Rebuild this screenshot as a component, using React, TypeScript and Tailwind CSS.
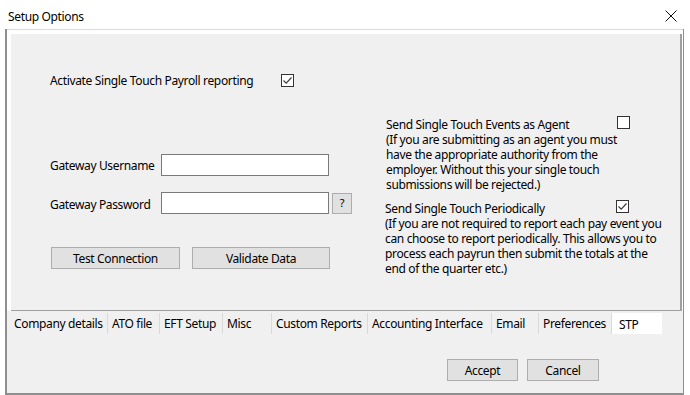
import React from "react";

const FONT = { fontFamily: '"Noto Sans", "Open Sans", sans-serif' };

const CheckBox = ({ checked = false, className = "" }: { checked?: boolean; className?: string }) => (
  <div className={`w-[13px] h-[13px] border border-[#333333] bg-white flex items-center justify-center shrink-0 ${className}`}>
    {checked && (
      <svg width="11" height="11" viewBox="0 0 11 11">
        <path d="M1.5 5.5 L4.2 8.2 L9.5 2.5" fill="none" stroke="#3c3c3c" strokeWidth="1.2" />
      </svg>
    )}
  </div>
);

const Btn = ({ label, w }: { label: string; w: string }) => (
  <div className={`${w} h-[22px] bg-[#e1e1e1] border border-[#adadad] flex items-center justify-center text-[12px] text-black pt-[1px]`}>
    {label}
  </div>
);

const TABS = [
  { label: "Company details", w: "w-[98px]" },
  { label: "ATO file", w: "w-[52px]" },
  { label: "EFT Setup", w: "w-[63px]" },
  { label: "Misc", w: "w-[49px]" },
  { label: "Custom Reports", w: "w-[96px]" },
  { label: "Accounting Interface", w: "w-[124px]" },
  { label: "Email", w: "w-[47px]" },
  { label: "Preferences", w: "w-[73px]" },
];

export default function App() {
  return (
    <div className="w-[690px] h-[395px] bg-white flex flex-col text-black overflow-hidden tracking-[-0.35px]" style={FONT}>
      {/* Title bar */}
      <div className="h-[29px] shrink-0 flex items-center justify-between pl-[8px] pr-[13px] pt-[4px]">
        <span className="text-[12px] leading-none">Setup Options</span>
        <svg width="12" height="12" viewBox="0 0 12 12" className="-mt-[1px]">
          <path d="M0.5 0.5 L11.5 11.5 M11.5 0.5 L0.5 11.5" stroke="#111" strokeWidth="1" />
        </svg>
      </div>

      {/* Client area */}
      <div className="ml-[5px] w-[679px] flex-1 flex flex-col bg-[#f0f0f0] border-l-2 border-r border-b-2 border-[#8f8f8f]">
        {/* Tab page */}
        <div className="h-[282px] shrink-0 border-t border-[#d9d9d9] bg-white pl-[4px] pt-[4px] pr-[1px] flex">
          <div className="flex-1 bg-[#f0f0f0] border-r-2 border-b border-[#a0a0a0] pl-[39px] pt-[39px] text-[12px]">
            <div className="flex items-center h-[16px]">
              <span className="w-[231px]">Activate Single Touch Payroll reporting</span>
              <CheckBox checked className="-mt-[2px]" />
            </div>

            <div className="flex mt-[28px]">
              {/* Left column */}
              <div className="w-[335px] pt-[37px] shrink-0">
                <div className="flex items-center">
                  <span className="w-[111px] pt-[2px]">Gateway Username</span>
                  <div className="w-[168px] h-[22px] bg-white border border-[#7a7a7a]" />
                </div>
                <div className="flex items-center mt-[16px]">
                  <span className="w-[111px] pt-[3px]">Gateway Password</span>
                  <div className="w-[168px] h-[22px] bg-white border border-[#7a7a7a]" />
                  <div className="ml-[3px] w-[20px] h-[21px] bg-[#e1e1e1] border border-[#adadad] flex items-center justify-center text-[11px]">
                    ?
                  </div>
                </div>
                <div className="flex mt-[33px] ml-[1px]">
                  <Btn label="Test Connection" w="w-[129px]" />
                  <div className="ml-[12px]">
                    <Btn label="Validate Data" w="w-[138px]" />
                  </div>
                </div>
              </div>

              {/* Right column */}
              <div className="leading-[15px] ml-[1px]">
                <div className="flex items-start">
                  <span className="w-[231px]">Send Single Touch Events as Agent</span>
                  <CheckBox className="-mt-[1px]" />
                </div>
                <div>(If you are submitting as an agent you must</div>
                <div>have the appropriate authority from the</div>
                <div>employer. Without this your single touch</div>
                <div>submissions will be rejected.)</div>

                <div className="flex items-start mt-[9px] -ml-[1px]">
                  <span className="w-[231px]">Send Single Touch Periodically</span>
                  <CheckBox checked className="-mt-[1px]" />
                </div>
                <div className="-ml-[1px]">
                  <div className="whitespace-nowrap">(If you are not required to report each pay event you</div>
                  <div className="whitespace-nowrap">can choose to report periodically. This allows you to</div>
                  <div className="whitespace-nowrap">process each payrun then submit the totals at the</div>
                  <div className="whitespace-nowrap">end of the quarter etc.)</div>
                </div>
              </div>
            </div>
          </div>
        </div>

        {/* Tabs */}
        <div className="flex h-[21px] mt-[2px] ml-[3px] text-[12px]">
          {TABS.map((t) => (
            <div key={t.label} className={`${t.w} h-full border-r border-[#dadada] pl-[4px] flex items-center whitespace-nowrap`}>
              {t.label}
            </div>
          ))}
          <div className="w-[50px] h-full bg-white pl-[7px] pt-[3px] flex items-center">STP</div>
        </div>

        {/* Dialog buttons */}
        <div className="flex justify-end pr-[84px] mt-[25px] gap-[9px]">
          <Btn label="Accept" w="w-[71px]" />
          <Btn label="Cancel" w="w-[72px]" />
        </div>
      </div>
    </div>
  );
}
